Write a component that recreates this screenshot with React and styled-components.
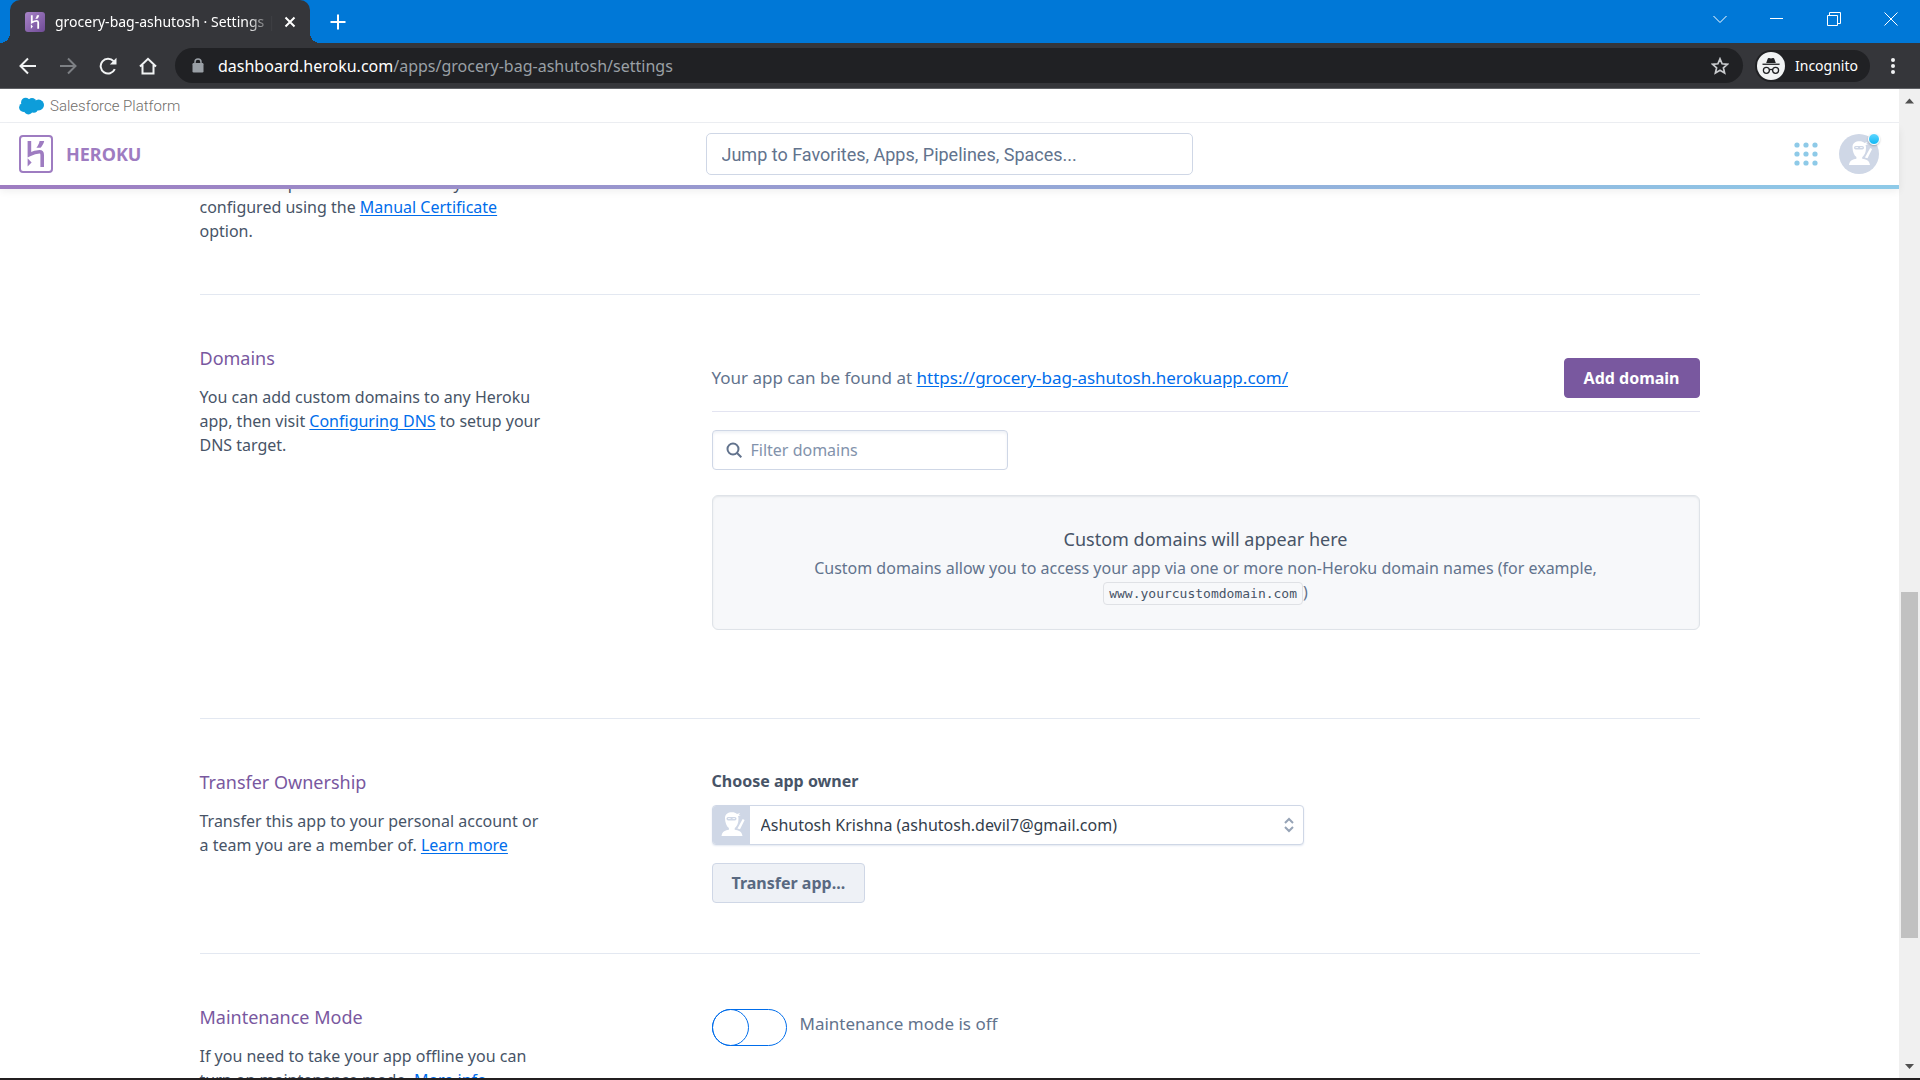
import React, { useState } from "react";
import styled, { createGlobalStyle } from "styled-components";

const GlobalStyle = createGlobalStyle`
  *, *::before, *::after { box-sizing: border-box; }
  body {
    margin: 0;
    background: #fff;
    color: #475467;
    font: 16px/24px "Noto Sans", "Open Sans", sans-serif;
  }
  h2, p { margin: 0; }
  button, input, select { font: inherit; color: inherit; margin: 0; }
  button { padding: 0; border: 0; background: none; cursor: pointer; }
  svg { display: block; flex: none; }
`;

/* ---------- Browser window ---------- */

const Window = styled.div`
  display: flex;
  flex-direction: column;
  height: 100vh;
  overflow: hidden;
  border-bottom: 2px solid #231f20;
`;

const TitleBar = styled.div`
  display: flex;
  align-items: stretch;
  height: 43px;
  padding: 0 1px 0 10px;
  background: #0078d7;
  color: #fff;
`;

const Tab = styled.div`
  position: relative;
  display: flex;
  align-items: center;
  width: 300px;
  padding: 0 10px 0 15px;
  border-radius: 10px 10px 0 0;
  background: #35363a;

  &::before,
  &::after {
    content: "";
    position: absolute;
    bottom: 0;
    width: 10px;
    height: 10px;
  }
  &::before {
    right: 100%;
    background: radial-gradient(circle at 0 0, transparent 10px, #35363a 10px);
  }
  &::after {
    left: 100%;
    background: radial-gradient(circle at 100% 0, transparent 10px, #35363a 10px);
  }
`;

const TabTitle = styled.span`
  flex: 1;
  min-width: 0;
  margin: 0 7px 0 10px;
  overflow: hidden;
  white-space: nowrap;
  font-size: 14px;
  line-height: 20px;
  mask-image: linear-gradient(to right, #000 88%, transparent);
`;

const IconButton = styled.button`
  display: flex;
  align-items: center;
  justify-content: center;
  width: ${(p) => p.$width || 40}px;
  color: ${(p) => p.$color || "#f1f3f4"};
`;

const WindowControls = styled.div`
  display: flex;
  margin-left: auto;
  padding-bottom: 6px;
`;

const Toolbar = styled.div`
  display: flex;
  align-items: center;
  height: 46px;
  padding: 0 4px 0 8px;
  background: #35363a;
  border-bottom: 1px solid #5f6165;
`;

const AddressBar = styled.div`
  display: flex;
  align-items: center;
  flex: 1;
  height: 35px;
  margin: 0 12px 0 7px;
  padding: 0 3px 0 17px;
  border-radius: 18px;
  background: #202124;
`;

const Address = styled.div`
  flex: 1;
  margin-left: 14px;
  color: #9aa0a6;
  line-height: 24px;

  strong {
    font-weight: 400;
    color: #fff;
  }
`;

const IncognitoBadge = styled.button`
  display: flex;
  align-items: center;
  gap: 10px;
  height: 32px;
  padding: 0 12px 0 2px;
  border-radius: 16px;
  background: #202124;
  color: #fff;
  font-size: 14px;
  line-height: 20px;
`;

const Viewport = styled.div`
  display: flex;
  flex: 1;
  min-height: 0;
`;

const Page = styled.div`
  display: flex;
  flex-direction: column;
  flex: 1;
  min-width: 0;
`;

const ScrollTrack = styled.div`
  display: flex;
  flex-direction: column;
  align-items: center;
  justify-content: space-between;
  width: 21px;
  padding: 9px 0 8px;
  background: #f0f0f0;
`;

const ScrollGap = styled.div`
  flex: ${(p) => p.$share};
`;

const ScrollThumb = styled.div`
  flex: 347;
  width: 17px;
  background: #c1c1c1;
`;

/* ---------- Heroku header ---------- */

const PlatformBar = styled.div`
  display: flex;
  align-items: center;
  gap: 6px;
  height: 34px;
  padding: 0 19px;
  border-bottom: 1px solid #eceef2;
  color: #706e6b;
  font: 300 15px/20px Roboto, sans-serif;
`;

const Header = styled.header`
  position: relative;
  z-index: 1;
  display: grid;
  grid-template-columns: 1fr 487px 1fr;
  align-items: center;
  padding: 10px 20px 10px 19px;
  background: #fff;
  box-shadow: 0 6px 8px rgba(0, 0, 0, 0.07);
`;

const HeaderRule = styled.div`
  position: relative;
  z-index: 2;
  flex: none;
  height: 4px;
  background: linear-gradient(to right, #9e7cc1, #8ecae8);
`;

const Brand = styled.a`
  display: flex;
  align-items: center;
  gap: 13px;
  justify-self: start;
  color: #9e7cc1;
  font-size: 18px;
  font-weight: 700;
  text-decoration: none;
`;

const JumpInput = styled.input`
  width: 100%;
  height: 42px;
  padding: 0 15px;
  border: 1px solid #cfd7e6;
  border-radius: 5px;
  background: #fff;
  font: 18px/24px Roboto, sans-serif;

  &::placeholder {
    color: #62738d;
    opacity: 1;
  }
`;

const HeaderActions = styled.div`
  display: flex;
  align-items: center;
  justify-content: flex-end;
  gap: 21px;
`;

const AccountButton = styled.button`
  position: relative;
  width: 40px;
  height: 40px;

  > svg {
    border-radius: 50%;
  }
  &::after {
    content: "";
    position: absolute;
    top: -1px;
    right: -1px;
    width: 12px;
    height: 12px;
    border: 1px solid #fff;
    border-radius: 50%;
    background: linear-gradient(#5ed6ff, #10b8f5);
    box-shadow: 0 1px 2px rgba(0, 0, 0, 0.25);
  }
`;

/* ---------- Settings ---------- */

const Main = styled.main`
  flex: 1;
  min-height: 0;
  overflow: hidden;
`;

const Scrolled = styled.div`
  width: 1500px;
  max-width: calc(100% - 48px);
  margin: -18px auto 0;
`;

const Section = styled.section`
  display: grid;
  grid-template-columns: 344px minmax(0, 1fr);
  column-gap: 168px;
  padding: ${(p) => (p.$first ? 0 : 50)}px 0 ${(p) => p.$bottom || 50}px;
  border-top: ${(p) => (p.$first ? 0 : 1)}px solid #e3e8f1;
`;

const SectionTitle = styled.h2`
  margin-bottom: 14px;
  color: #79589f;
  font-size: 18px;
  font-weight: 400;
  line-height: 26px;
`;

const Link = styled.a`
  color: #006deb;
  text-decoration: underline;
  text-underline-offset: 2px;
`;

const DomainRow = styled.div`
  display: flex;
  align-items: center;
  justify-content: space-between;
  padding: 13px 0;
  border-bottom: 1px solid #e3e4f1;
`;

const Lead = styled.p`
  color: #62738d;
  font-size: 17px;
`;

const Button = styled.button`
  height: 40px;
  padding: 0 19px;
  border: 1px solid ${(p) => (p.$primary ? "#79589f" : "#cfd7e6")};
  border-radius: 4px;
  background: ${(p) => (p.$primary ? "#79589f" : "#eef1f6")};
  color: ${(p) => (p.$primary ? "#fff" : "#596981")};
  font-weight: 700;
`;

const Field = styled.div`
  display: flex;
  align-items: center;
  width: ${(p) => p.$width}px;
  height: 40px;
  overflow: hidden;
  border: 1px solid #cfd7e6;
  border-radius: 4px;
  background: #fff;
  box-shadow: ${(p) => (p.$inset ? "inset 0 2px 3px #eef1f6" : "0 1px 2px #e3e8f1")};
`;

const FilterField = styled(Field)`
  gap: 9px;
  margin-top: 18px;
  padding: 0 13px;
  color: #62738d;
`;

const FilterInput = styled.input`
  flex: 1;
  min-width: 0;
  padding: 0;
  border: 0;
  outline: 0;
  background: none;

  &::placeholder {
    color: #8292ab;
    opacity: 1;
  }
`;

const EmptyState = styled.div`
  margin: 25px 0 38px;
  padding: 31px 32px 25px;
  border: 1px solid #dfe3e8;
  border-radius: 6px;
  background: #f7f8fa;
  box-shadow: inset 0 1px 2px #e3e6ea;
  color: #62738d;
  text-align: center;
`;

const EmptyTitle = styled.p`
  margin-bottom: 5px;
  color: #475467;
  font-size: 18px;
`;

const Code = styled.code`
  padding: 3px 5px;
  border: 1px solid #dfe1e5;
  border-radius: 4px;
  color: #475467;
  font: 13px/16px "DejaVu Sans Mono", "Liberation Mono", monospace;
`;

const FieldLabel = styled.label`
  display: block;
  margin-bottom: 12px;
  font-weight: 700;
`;

const OwnerField = styled(Field)`
  margin-bottom: 18px;
  padding-right: 8px;
  color: #333d4b;
`;

const OwnerSelect = styled.select`
  appearance: none;
  flex: 1;
  min-width: 0;
  height: 38px;
  padding: 0 11px;
  border: 0;
  outline: 0;
  background: none;
`;

const ToggleRow = styled.div`
  display: flex;
  align-items: flex-start;
  gap: 13px;
  padding-top: 5px;
`;

const Toggle = styled.input`
  appearance: none;
  width: 75px;
  height: 37px;
  border: 1px solid #006deb;
  border-radius: 19px;
  background: #fff;

  &::before {
    content: "";
    display: block;
    width: 37px;
    height: 37px;
    margin: -1px;
    border: 1px solid #006deb;
    border-radius: 50%;
  }
  &:checked::before {
    margin-left: 37px;
  }
`;

const ToggleLabel = styled.label`
  padding-top: 3px;
  color: #62738d;
  font-size: 17px;
`;

/* ---------- Drawings ---------- */

const Stroke = ({ size = 20, w = 2, children, ...rest }) => (
  <svg width={size} height={size} viewBox={`0 0 ${size} ${size}`} fill="none" stroke="currentColor" strokeWidth={w} aria-hidden="true" {...rest}>
    {children}
  </svg>
);

const HerokuGlyph = () => (
  <g fill="none" stroke="currentColor" strokeWidth="3.6">
    <path d="M10.4 6v13.6c4-2 7.200-2.800 10.200-2.800 2.200 0 2.600 1.400 2.600 3.200V32" />
    <path d="M20.6 6h4.600c-.6 2.600-1.800 4.800-3.600 6.800h-4.200c1.600-2 2.700-4.200 3.200-6.800z" fill="currentColor" stroke="none" />
    <path d="M8.600 23.200v8.400l4-4.200z" fill="currentColor" stroke="none" />
  </g>
);

const HerokuLogo = () => (
  <svg width="34" height="38" viewBox="0 0 34 38" aria-hidden="true">
    <rect x="1" y="1" width="32" height="36" rx="3" fill="none" stroke="currentColor" strokeWidth="2" />
    <HerokuGlyph />
  </svg>
);

const Favicon = () => (
  <svg width="20" height="20" viewBox="0 0 20 20" color="#fff" aria-hidden="true">
    <defs>
      <linearGradient id="fav" x1="0" y1="0" x2="1" y2="1">
        <stop offset="0" stopColor="#a884c8" />
        <stop offset="1" stopColor="#6f4b96" />
      </linearGradient>
    </defs>
    <rect width="20" height="20" rx="3" fill="url(#fav)" />
    <g transform="translate(1.600 .2) scale(.5 .52)">
      <HerokuGlyph />
    </g>
  </svg>
);

const Cloud = () => (
  <svg width="25" height="18" viewBox="0 0 25 18" fill="#0d9dda" aria-hidden="true">
    <circle cx="6.600" cy="5.200" r="4.500" />
    <circle cx="13" cy="5.400" r="4.300" />
    <circle cx="19.600" cy="8" r="5.400" />
    <circle cx="4.600" cy="10.400" r="4.500" />
    <circle cx="9.400" cy="12.800" r="4.600" />
    <circle cx="14.800" cy="11.400" r="4.300" />
    <path d="M5 5h14v7H5z" />
  </svg>
);

const Ninja = ({ width, height }) => (
  <svg width={width} height={height} viewBox={`${(40 - width) / 2} ${(40 - height) / 2} ${width} ${height}`} aria-hidden="true">
    <rect width="40" height="40" fill="#cfd7e6" />
    <g fill="#fff">
      <path d="M13.500 13c0-4 3-5.800 7-5.800 2.200 0 3.800.5 5 1.700l3.200-.9-1.500 1.900 2 .8-2.600.4c.3 1 .4 1.800.4 2.900 0 4-1.500 7.500-3.800 9.200v1.500c3.600.7 7.200 1.400 7.800 6.300H10c.6-4.900 4.200-5.600 7.400-6.300v-1.600c-2.400-1.800-3.900-5.600-3.900-10.100z" />
      <path d="M31.200 14l1.900.9-4.600 9.300-2.600-.6z" />
    </g>
    <rect x="15" y="12" width="10" height="3.400" rx="1.700" fill="#cfd7e6" />
    <path d="M16.500 13.500h2.600m2 0h2.400" stroke="#f3f6fa" strokeWidth="1.200" />
  </svg>
);

const AppsGrid = () => (
  <svg width="24" height="24" viewBox="0 0 24 24" fill="#8ecae8" aria-hidden="true">
    {[3, 12, 21].map((y) => [3, 12, 21].map((x) => <circle key={`${x}-${y}`} cx={x} cy={y} r="2.600" />))}
  </svg>
);

const IncognitoIcon = () => (
  <svg width="28" height="28" viewBox="0 0 28 28" aria-hidden="true">
    <circle cx="14" cy="14" r="14" fill="#f1f3f4" />
    <path d="M9.200 11l1.500-4.300c.2-.7.800-.9 1.400-.7l1.900.5 1.900-.5c.6-.2 1.200 0 1.400.7l1.500 4.300z" fill="#202124" />
    <path d="M5.500 11.600h17v1.300h-17z" fill="#202124" />
    <g fill="none" stroke="#202124" strokeWidth="1.300">
      <circle cx="9.400" cy="18.300" r="3" />
      <circle cx="18.600" cy="18.300" r="3" />
      <path d="M12.400 18c1-.7 2.200-.7 3.200 0" />
    </g>
  </svg>
);

const ScrollArrow = ({ down }) => (
  <svg width="9" height="6" viewBox="0 0 9 6" fill="#505050" aria-hidden="true">
    <path d={down ? "M0 0h9L4.500 5z" : "M0 5.500h9L4.500 .5z"} />
  </svg>
);

/* ---------- App ---------- */

function BrowserChrome() {
  return (
    <>
      <TitleBar>
        <Tab>
          <Favicon />
          <TabTitle>grocery-bag-ashutosh · Settings |</TabTitle>
          <IconButton $width={20} $color="#fff" aria-label="Close tab">
            <Stroke size={12}><path d="M1.500 1.500l9 9m0-9l-9 9" /></Stroke>
          </IconButton>
        </Tab>
        <IconButton $width={55} $color="#fff" aria-label="New tab">
          <Stroke size={16} w={2}><path d="M8 .5v15M.5 8h15" /></Stroke>
        </IconButton>
        <WindowControls>
          <IconButton $width={57} $color="#fff" aria-label="Search tabs">
            <Stroke size={14} w={1}><path d="M.5 4l6.500 6.500L13.500 4" /></Stroke>
          </IconButton>
          <IconButton $width={57} $color="#fff" aria-label="Minimize">
            <Stroke size={13} w={1}><path d="M0 6.500h13" /></Stroke>
          </IconButton>
          <IconButton $width={57} $color="#fff" aria-label="Restore">
            <Stroke size={14} w={1}><path d="M.5 3.500h10v10H.5zM2.500 3.500v-3h11v11h-3" /></Stroke>
          </IconButton>
          <IconButton $width={57} $color="#fff" aria-label="Close window">
            <Stroke size={14} w={1}><path d="M.5 .5l13 13m0-13l-13 13" /></Stroke>
          </IconButton>
        </WindowControls>
      </TitleBar>
      <Toolbar>
        <IconButton aria-label="Back">
          <Stroke size={18}><path d="M17 9H2M9 1.500L1.500 9 9 16.500" /></Stroke>
        </IconButton>
        <IconButton $color="#7d8084" aria-label="Forward">
          <Stroke size={18}><path d="M1 9h15M9 1.500L16.500 9 9 16.500" /></Stroke>
        </IconButton>
        <IconButton aria-label="Reload">
          <Stroke size={18}>
            <path d="M15.800 12.200A7.400 7.400 0 1 1 14.600 4.200" />
            <path d="M17.500 .8v6.700h-6.700z" fill="currentColor" stroke="none" />
          </Stroke>
        </IconButton>
        <IconButton aria-label="Home">
          <Stroke size={18}><path d="M1 9.500L9 1.800l8 7.700M3.500 8v8.500h11V8" /></Stroke>
        </IconButton>
        <AddressBar>
          <svg width="12" height="15" viewBox="0 0 12 15" aria-hidden="true">
            <rect x=".5" y="5" width="11" height="9.500" rx="1.200" fill="#9aa0a6" />
            <path d="M3 5.500V4a3 3 0 0 1 6 0v1.500" fill="none" stroke="#9aa0a6" strokeWidth="1.500" />
          </svg>
          <Address><strong>dashboard.heroku.com</strong>/apps/grocery-bag-ashutosh/settings</Address>
          <IconButton $color="#c8cacd" aria-label="Bookmark this tab">
            <Stroke size={18} w={1.7}><path d="M9 1.800l2.100 5 5.300.5-4 3.500 1.200 5.300L9 13.300l-4.600 2.800 1.200-5.300-4-3.500 5.300-.5z" /></Stroke>
          </IconButton>
        </AddressBar>
        <IncognitoBadge><IncognitoIcon />Incognito</IncognitoBadge>
        <IconButton $width={46} aria-label="Menu">
          <svg width="4" height="18" viewBox="0 0 4 18" fill="currentColor" aria-hidden="true">
            <circle cx="2" cy="3" r="2" /><circle cx="2" cy="9" r="2" /><circle cx="2" cy="15" r="2" />
          </svg>
        </IconButton>
      </Toolbar>
    </>
  );
}

function Settings() {
  const [maintenance, setMaintenance] = useState(false);
  return (
    <Main>
      <Scrolled>
        <Section $first $bottom={51}>
          <p>
            certificate options can be manually
            <br />
            configured using the <Link href="#certificate">Manual Certificate</Link>
            <br />
            option.
          </p>
        </Section>
        <Section>
          <div>
            <SectionTitle>Domains</SectionTitle>
            <p>
              You can add custom domains to any Heroku app, then visit <Link href="#dns">Configuring DNS</Link> to setup your DNS target.
            </p>
          </div>
          <div>
            <DomainRow>
              <Lead>
                Your app can be found at <Link href="#app">https://grocery-bag-ashutosh.herokuapp.com/</Link>
              </Lead>
              <Button $primary>Add domain</Button>
            </DomainRow>
            <FilterField $width={296} $inset>
              <Stroke size={16}><circle cx="7" cy="7" r="5.500" /><path d="M11 11l4.300 4.300" /></Stroke>
              <FilterInput type="text" placeholder="Filter domains" aria-label="Filter domains" />
            </FilterField>
            <EmptyState>
              <EmptyTitle>Custom domains will appear here</EmptyTitle>
              <p>
                Custom domains allow you to access your app via one or more non-Heroku domain names (for example,{" "}
                <Code>www.yourcustomdomain.com</Code>)
              </p>
            </EmptyState>
          </div>
        </Section>
        <Section>
          <div>
            <SectionTitle>Transfer Ownership</SectionTitle>
            <p>
              Transfer this app to your personal account or a team you are a member of. <Link href="#transfer">Learn more</Link>
            </p>
          </div>
          <div>
            <FieldLabel htmlFor="owner">Choose app owner</FieldLabel>
            <OwnerField $width={592}>
              <Ninja width={37} height={38} />
              <OwnerSelect id="owner">
                <option>Ashutosh Krishna (ashutosh.devil7@gmail.com)</option>
              </OwnerSelect>
              <Stroke size={12} height={16} viewBox="0 0 12 16" w={2} color="#96a3b6">
                <path d="M2 6l4-4 4 4M2 10l4 4 4-4" />
              </Stroke>
            </OwnerField>
            <Button>Transfer app...</Button>
          </div>
        </Section>
        <Section>
          <div>
            <SectionTitle>Maintenance Mode</SectionTitle>
            <p>
              If you need to take your app offline you can turn on maintenance mode. <Link href="#maintenance">More info</Link>
            </p>
          </div>
          <ToggleRow>
            <Toggle id="maintenance" type="checkbox" role="switch" checked={maintenance} onChange={(e) => setMaintenance(e.target.checked)} />
            <ToggleLabel htmlFor="maintenance">Maintenance mode is {maintenance ? "on" : "off"}</ToggleLabel>
          </ToggleRow>
        </Section>
      </Scrolled>
    </Main>
  );
}

export default function App() {
  return (
    <Window>
      <GlobalStyle />
      <BrowserChrome />
      <Viewport>
        <Page>
          <PlatformBar><Cloud />Salesforce Platform</PlatformBar>
          <Header>
            <Brand href="#home"><HerokuLogo />HEROKU</Brand>
            <JumpInput type="text" placeholder="Jump to Favorites, Apps, Pipelines, Spaces..." aria-label="Jump to" />
            <HeaderActions>
              <IconButton $width={24} aria-label="Apps"><AppsGrid /></IconButton>
              <AccountButton aria-label="Account"><Ninja width={40} height={40} /></AccountButton>
            </HeaderActions>
          </Header>
          <HeaderRule />
          <Settings />
        </Page>
        <ScrollTrack>
          <ScrollArrow />
          <ScrollGap $share={488} />
          <ScrollThumb />
          <ScrollGap $share={126} />
          <ScrollArrow down />
        </ScrollTrack>
      </Viewport>
    </Window>
  );
}
